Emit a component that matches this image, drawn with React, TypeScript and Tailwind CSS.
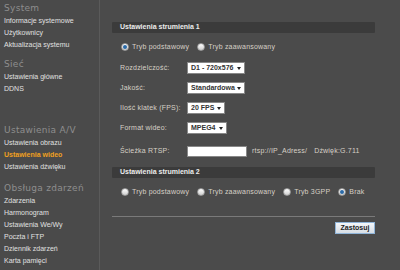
const menu = [
  {
    title: "System",
    mt: "mt-[1px]",
    items: ["Informacje systemowe", "Użytkownicy", "Aktualizacja systemu"],
  },
  { title: "Sieć", mt: "mt-[6px]", items: ["Ustawienia główne", "DDNS"] },
  {
    title: "Ustawienia A/V",
    mt: "mt-[28px]",
    items: ["Ustawienia obrazu", "Ustawienia wideo", "Ustawienia dźwięku"],
  },
  {
    title: "Obsługa zdarzeń",
    mt: "mt-[8px]",
    items: [
      "Zdarzenia",
      "Harmonogram",
      "Ustawienia We/Wy",
      "Poczta i FTP",
      "Dziennik zdarzeń",
      "Karta pamięci",
    ],
  },
];

const active = "Ustawienia wideo";

function Radio({ checked, label }: { checked?: boolean; label: string }) {
  return (
    <div className="flex items-center gap-[3px] whitespace-nowrap">
      <span className="flex h-[8px] w-[8px] items-center justify-center rounded-full border border-[#9a9a9a] bg-gradient-to-b from-white to-[#cfcfcf]">
        {checked && <span className="h-[4px] w-[4px] rounded-full bg-[#2a6aa8]" />}
      </span>
      <span className="text-[7px] tracking-[0.2px] text-[#d6d0c6]">{label}</span>
    </div>
  );
}

function Select({ value, width }: { value: string; width: string }) {
  return (
    <div
      className={`flex h-[12px] ${width} shrink-0 items-center justify-between whitespace-nowrap border border-[#888] bg-white pl-[3px] pr-[3px]`}
    >
      <span className="text-[7px] font-bold text-[#333]">{value}</span>
      <span className="h-0 w-0 border-x-[2.5px] border-t-[3px] border-x-transparent border-t-[#222]" />
    </div>
  );
}

function SectionBar({ title, mt }: { title: string; mt: string }) {
  return (
    <div
      className={`${mt} flex h-[11px] items-center whitespace-nowrap rounded-[1px] bg-[#3b3b3b] pl-[8px] text-[7px] font-bold text-[#ececec]`}
    >
      {title}
    </div>
  );
}

function Row({ label, mt, children }: { label: string; mt: string; children: React.ReactNode }) {
  return (
    <div className={`${mt} flex h-[12px] items-center whitespace-nowrap`}>
      <span className="w-[75px] shrink-0 pl-[8px] text-[7px] tracking-[0.2px] text-[#d6d0c6]">
        {label}
      </span>
      {children}
    </div>
  );
}

export default function App() {
  return (
    <div
      className="flex h-[270px] w-[400px] overflow-hidden bg-[#4b4b4b]"
      style={{ fontFamily: '"Liberation Sans", Arial, sans-serif' }}
    >
      {/* SIDEBAR */}
      <div className="flex w-[100px] shrink-0 flex-col border-r border-[#5a5a5a] bg-[#4a4a4a] pl-[4px]">
        {menu.map((group) => (
          <div key={group.title} className={`${group.mt} flex flex-col`}>
            <div
              className="h-[14px] whitespace-nowrap text-[9px] leading-[14px] tracking-[0.3px] text-[#8e8e8e]"
              style={{ fontFamily: '"DejaVu Sans", sans-serif' }}
            >
              {group.title}
            </div>
            {group.items.map((item) => (
              <div
                key={item}
                className={`h-[12px] whitespace-nowrap text-[7px] leading-[12px] ${
                  item === active ? "font-bold text-[#f0a020]" : "text-[#e0e0e0]"
                }`}
              >
                {item}
              </div>
            ))}
          </div>
        ))}
      </div>

      {/* MAIN */}
      <div className="flex w-[275px] shrink-0 flex-col pl-[12px] pt-[22px]">
        <SectionBar title="Ustawienia strumienia 1" mt="mt-0" />

        <div className="mt-[8px] flex h-[12px] items-center gap-[8px] pl-[9px]">
          <Radio checked label="Tryb podstawowy" />
          <Radio label="Tryb zaawansowany" />
        </div>

        <Row label="Rozdzielczość:" mt="mt-[9px]">
          <Select value="D1 - 720x576" width="w-[58px]" />
        </Row>
        <Row label="Jakość:" mt="mt-[8px]">
          <Select value="Standardowa" width="w-[58px]" />
        </Row>
        <Row label="Ilość klatek (FPS):" mt="mt-[8px]">
          <Select value="20 FPS" width="w-[38px]" />
        </Row>
        <Row label="Format wideo:" mt="mt-[8px]">
          <Select value="MPEG4" width="w-[40px]" />
        </Row>
        <Row label="Ścieżka RTSP:" mt="mt-[11px]">
          <div className="h-[11px] w-[60px] shrink-0 border border-[#888] bg-white" />
          <span className="ml-[5px] text-[7px] tracking-[0.2px] text-[#d6d0c6]">rtsp://IP_Adress/</span>
          <span className="ml-[7px] text-[7px] tracking-[0.2px] text-[#d6d0c6]">Dźwięk:G.711</span>
        </Row>

        <SectionBar title="Ustawienia strumienia 2" mt="mt-[10px]" />

        <div className="mt-[8px] flex h-[12px] items-center gap-[8px] pl-[9px]">
          <Radio label="Tryb podstawowy" />
          <Radio label="Tryb zaawansowany" />
          <Radio label="Tryb 3GPP" />
          <Radio checked label="Brak" />
        </div>

        <div className="mt-[18px] h-px bg-[#7a7a7a]" />

        <div className="mt-[5px] flex justify-end">
          <button className="h-[12px] w-[40px] border border-[#8fb4d8] bg-gradient-to-b from-[#f4f7fa] to-[#d6dde4] text-[7px] font-bold leading-[10px] text-[#222]">
            Zastosuj
          </button>
        </div>
      </div>
    </div>
  );
}
